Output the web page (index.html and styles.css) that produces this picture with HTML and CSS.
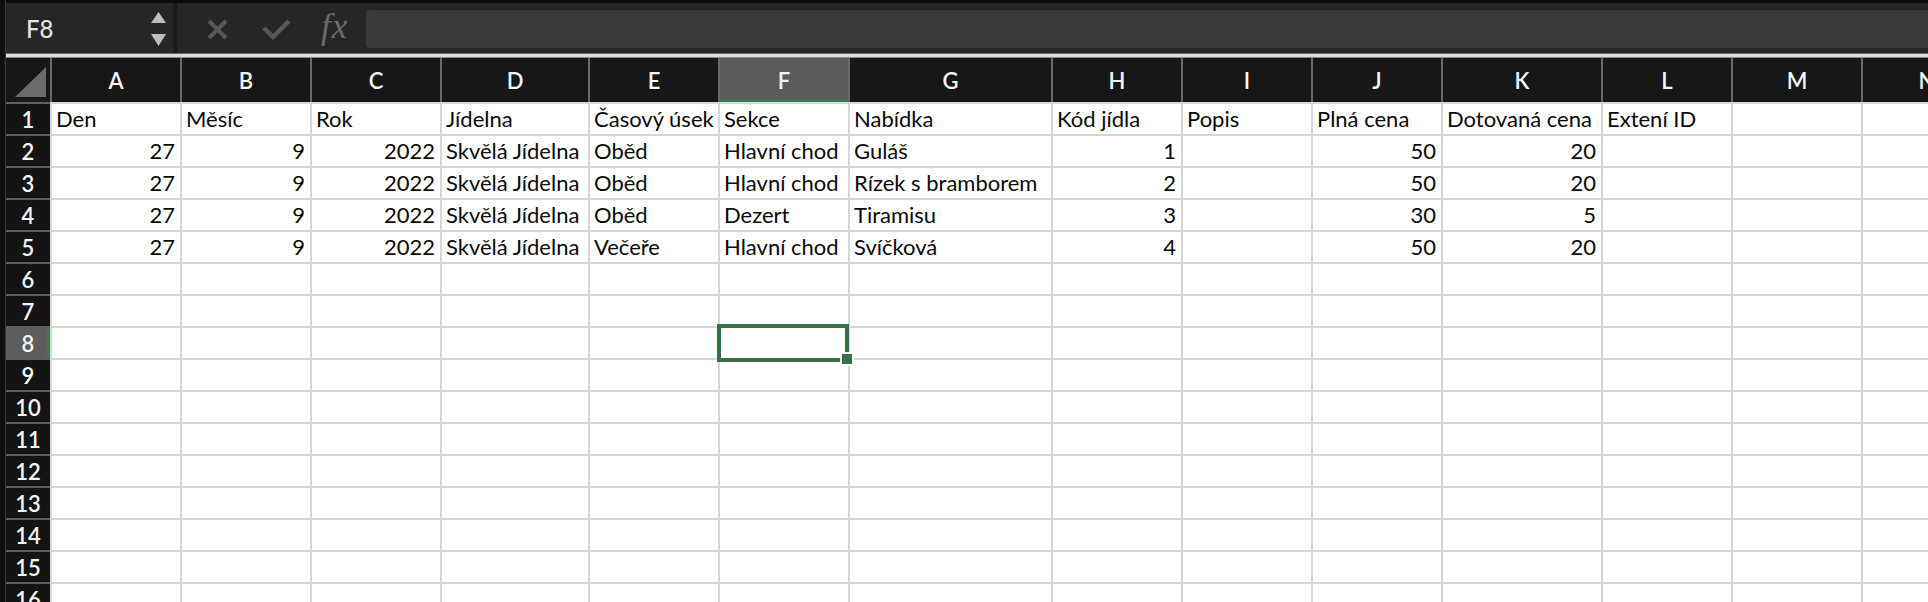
FILE: index.html
```html
<!DOCTYPE html>
<html lang="cs">
<head>
<meta charset="utf-8">
<title>Sheet</title>
<link rel="stylesheet" href="styles.css">
</head>
<body>
<div class="app">
  <div class="toolbar">
    <div class="namebox">
      <span class="ref">F8</span>
      <div class="spin">
        <svg width="15" height="11" viewBox="0 0 15 11"><polygon points="7.5,0 15,11 0,11" fill="#bdbdbd"/></svg>
        <svg width="15" height="12" viewBox="0 0 15 12"><polygon points="0,0 15,0 7.5,12" fill="#bdbdbd"/></svg>
      </div>
    </div>
    <div class="sep"></div>
    <div class="fbtns">
      <svg class="ico-x" width="21" height="21" viewBox="0 0 21 21"><path d="M2 2 L19 19 M19 2 L2 19" stroke="#575757" stroke-width="4" fill="none"/></svg>
      <svg class="ico-ok" width="29" height="21" viewBox="0 0 29 21"><path d="M2 9 L11 18 L27 2" stroke="#575757" stroke-width="4.5" fill="none"/></svg>
      <span class="fx">fx</span>
    </div>
    <div class="formula"></div>
  </div>
  <div class="divider"></div>
  <div class="sheet">
    <div class="corner"><svg width="31" height="30" viewBox="0 0 31 30"><polygon points="0,30 31,0 31,30" fill="#6b6b6b"/></svg></div>
    <div class="ch">A</div><div class="ch">B</div><div class="ch">C</div><div class="ch">D</div><div class="ch">E</div><div class="ch sel">F</div><div class="ch">G</div><div class="ch">H</div><div class="ch">I</div><div class="ch">J</div><div class="ch">K</div><div class="ch">L</div><div class="ch">M</div><div class="ch">N</div>

    <div class="rh">1</div><div class="c">Den</div><div class="c">Měsíc</div><div class="c">Rok</div><div class="c">Jídelna</div><div class="c">Časový úsek</div><div class="c">Sekce</div><div class="c">Nabídka</div><div class="c">Kód jídla</div><div class="c">Popis</div><div class="c">Plná cena</div><div class="c">Dotovaná cena</div><div class="c">Extení ID</div><div class="c"></div><div class="c"></div>

    <div class="rh">2</div><div class="c n">27</div><div class="c n">9</div><div class="c n">2022</div><div class="c">Skvělá Jídelna</div><div class="c">Oběd</div><div class="c">Hlavní chod</div><div class="c">Guláš</div><div class="c n">1</div><div class="c"></div><div class="c n">50</div><div class="c n">20</div><div class="c"></div><div class="c"></div><div class="c"></div>

    <div class="rh">3</div><div class="c n">27</div><div class="c n">9</div><div class="c n">2022</div><div class="c">Skvělá Jídelna</div><div class="c">Oběd</div><div class="c">Hlavní chod</div><div class="c">Rízek s bramborem</div><div class="c n">2</div><div class="c"></div><div class="c n">50</div><div class="c n">20</div><div class="c"></div><div class="c"></div><div class="c"></div>

    <div class="rh">4</div><div class="c n">27</div><div class="c n">9</div><div class="c n">2022</div><div class="c">Skvělá Jídelna</div><div class="c">Oběd</div><div class="c">Dezert</div><div class="c">Tiramisu</div><div class="c n">3</div><div class="c"></div><div class="c n">30</div><div class="c n">5</div><div class="c"></div><div class="c"></div><div class="c"></div>

    <div class="rh">5</div><div class="c n">27</div><div class="c n">9</div><div class="c n">2022</div><div class="c">Skvělá Jídelna</div><div class="c">Večeře</div><div class="c">Hlavní chod</div><div class="c">Svíčková</div><div class="c n">4</div><div class="c"></div><div class="c n">50</div><div class="c n">20</div><div class="c"></div><div class="c"></div><div class="c"></div>

    <div class="rh">6</div><div class="c"></div><div class="c"></div><div class="c"></div><div class="c"></div><div class="c"></div><div class="c"></div><div class="c"></div><div class="c"></div><div class="c"></div><div class="c"></div><div class="c"></div><div class="c"></div><div class="c"></div><div class="c"></div>

    <div class="rh">7</div><div class="c"></div><div class="c"></div><div class="c"></div><div class="c"></div><div class="c"></div><div class="c"></div><div class="c"></div><div class="c"></div><div class="c"></div><div class="c"></div><div class="c"></div><div class="c"></div><div class="c"></div><div class="c"></div>

    <div class="rh sel">8</div><div class="c"></div><div class="c"></div><div class="c"></div><div class="c"></div><div class="c"></div><div class="c active"><span class="selbox"></span><span class="handle"></span></div><div class="c"></div><div class="c"></div><div class="c"></div><div class="c"></div><div class="c"></div><div class="c"></div><div class="c"></div><div class="c"></div>

    <div class="rh">9</div><div class="c"></div><div class="c"></div><div class="c"></div><div class="c"></div><div class="c"></div><div class="c"></div><div class="c"></div><div class="c"></div><div class="c"></div><div class="c"></div><div class="c"></div><div class="c"></div><div class="c"></div><div class="c"></div>

    <div class="rh">10</div><div class="c"></div><div class="c"></div><div class="c"></div><div class="c"></div><div class="c"></div><div class="c"></div><div class="c"></div><div class="c"></div><div class="c"></div><div class="c"></div><div class="c"></div><div class="c"></div><div class="c"></div><div class="c"></div>

    <div class="rh">11</div><div class="c"></div><div class="c"></div><div class="c"></div><div class="c"></div><div class="c"></div><div class="c"></div><div class="c"></div><div class="c"></div><div class="c"></div><div class="c"></div><div class="c"></div><div class="c"></div><div class="c"></div><div class="c"></div>

    <div class="rh">12</div><div class="c"></div><div class="c"></div><div class="c"></div><div class="c"></div><div class="c"></div><div class="c"></div><div class="c"></div><div class="c"></div><div class="c"></div><div class="c"></div><div class="c"></div><div class="c"></div><div class="c"></div><div class="c"></div>

    <div class="rh">13</div><div class="c"></div><div class="c"></div><div class="c"></div><div class="c"></div><div class="c"></div><div class="c"></div><div class="c"></div><div class="c"></div><div class="c"></div><div class="c"></div><div class="c"></div><div class="c"></div><div class="c"></div><div class="c"></div>

    <div class="rh">14</div><div class="c"></div><div class="c"></div><div class="c"></div><div class="c"></div><div class="c"></div><div class="c"></div><div class="c"></div><div class="c"></div><div class="c"></div><div class="c"></div><div class="c"></div><div class="c"></div><div class="c"></div><div class="c"></div>

    <div class="rh">15</div><div class="c"></div><div class="c"></div><div class="c"></div><div class="c"></div><div class="c"></div><div class="c"></div><div class="c"></div><div class="c"></div><div class="c"></div><div class="c"></div><div class="c"></div><div class="c"></div><div class="c"></div><div class="c"></div>

    <div class="rh">16</div><div class="c"></div><div class="c"></div><div class="c"></div><div class="c"></div><div class="c"></div><div class="c"></div><div class="c"></div><div class="c"></div><div class="c"></div><div class="c"></div><div class="c"></div><div class="c"></div><div class="c"></div><div class="c"></div>
  </div>
</div>
</body>
</html>
```

FILE: styles.css
```css
html, body {
  margin: 0;
  padding: 0;
  background: #101010;
  width: 1928px;
  height: 602px;
  overflow: hidden;
  font-family: Lato, "Open Sans", "Liberation Sans", sans-serif;
}

.app {
  margin-left: 5px;
  border-left: 1px solid #3a3a3a;
  width: 1922px;
}

/* ---------- toolbar ---------- */
.toolbar {
  height: 50px;
  border-top: 3px solid #0b0b0b;
  background: #262626;
  display: flex;
  align-items: stretch;
}

.namebox {
  width: 167px;
  box-sizing: border-box;
  padding: 0 7px 0 20px;
  display: flex;
  align-items: center;
  justify-content: space-between;
}

.ref {
  color: #e2e2e2;
  font-size: 24px;
  font-weight: 500;
  margin-top: 1px;
}

.spin {
  display: flex;
  flex-direction: column;
  gap: 11px;
  padding-top: 1px;
}

.spin svg { display: block; }

.sep {
  width: 4px;
  background: #1b1b1b;
}

.fbtns {
  width: 189px;
  display: flex;
  align-items: center;
  padding-left: 30px;
  box-sizing: border-box;
}

.ico-x { margin-top: 2px; }
.ico-ok { margin-left: 34px; margin-top: 2px; }

.fx {
  margin-left: 30px;
  font-family: "Liberation Serif", "DejaVu Serif", serif;
  font-style: italic;
  font-size: 35px;
  color: #6a6a6a;
  margin-top: -3px;
  letter-spacing: 1px;
}

.formula {
  flex: 1;
  margin: 7px 0 5px 0;
  background: #3a3a3a;
  border-radius: 3px 0 0 3px;
}

.divider {
  height: 3px;
  background: #dcdcdc;
  border-top: 1px solid #6c6c6c;
  border-bottom: 1px solid #8a8a8a;
}

/* ---------- sheet ---------- */
.sheet {
  display: grid;
  grid-template-columns: 44px 130px 130px 130px 148px 130px 130px 203px 130px 130px 130px 160px 130px 130px 130px;
  grid-template-rows: 44px;
  grid-auto-rows: 32px;
  background: #ffffff;
}

.corner {
  background: #171717;
  display: flex;
  align-items: flex-end;
  justify-content: flex-end;
  padding: 0 4px 5px 0;
}
.corner svg { display: block; }

.ch {
  background: #171717;
  border-left: 2px solid #686868;
  color: #f4f4f4;
  font-size: 22px;
  font-weight: 600;
  display: flex;
  align-items: center;
  justify-content: center;
}

.ch.sel {
  background: #5b5b5b;
  border-bottom: 3px solid #3d7a4e;
  padding-top: 3px;
}

.rh {
  background: #141414;
  border-top: 2px solid #5e5e5e;
  color: #f4f4f4;
  font-size: 22px;
  font-weight: 600;
  display: flex;
  align-items: center;
  justify-content: center;
}

.rh.sel {
  background: #5d5d5d;
  border-right: 3px solid #3d7a4e;
  padding-left: 3px;
}

.c {
  border-left: 2px solid #d6d6d6;
  border-top: 2px solid #d6d6d6;
  color: #0a0a0a;
  font-size: 22px;
  line-height: 30px;
  padding: 0 5px 0 4px;
  white-space: nowrap;
  overflow: visible;
  min-width: 0;
}

.c.n { text-align: right; }

.c.active { position: relative; }

.selbox {
  position: absolute;
  left: -3px;
  top: -4px;
  width: 132px;
  height: 38px;
  box-sizing: border-box;
  border: 4px solid #3a6f4a;
}

.handle {
  position: absolute;
  left: 122px;
  top: 26px;
  width: 10px;
  height: 10px;
  background: #3a6f4a;
  outline: 2px solid #ffffff;
}
```
